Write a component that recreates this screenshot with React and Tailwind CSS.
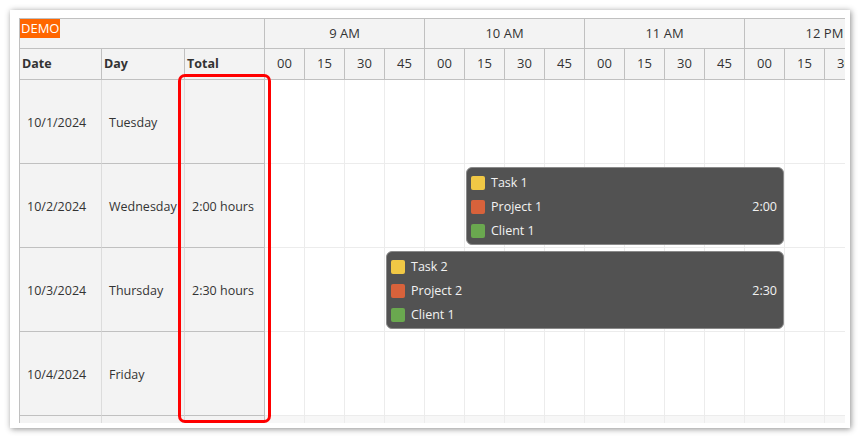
import React from 'react'

const hours = ['9 AM', '10 AM', '11 AM', '12 PM']
const minutes = ['00', '15', '30', '45']

const rows = [
  { date: '10/1/2024', day: 'Tuesday', total: '' },
  {
    date: '10/2/2024',
    day: 'Wednesday',
    total: '2:00 hours',
    event: { task: 'Task 1', project: 'Project 1', client: 'Client 1', time: '2:00', left: 201, width: 318 },
  },
  {
    date: '10/3/2024',
    day: 'Thursday',
    total: '2:30 hours',
    event: { task: 'Task 2', project: 'Project 2', client: 'Client 1', time: '2:30', left: 121, width: 398 },
  },
  { date: '10/4/2024', day: 'Friday', total: '' },
  { date: '10/5/2024', day: 'Saturday', total: '', weekend: true },
]

const EventBox = ({ e }) => {
  const lines = [
    { label: e.task, color: 'bg-[#f1c845]' },
    { label: e.project, color: 'bg-[#d8623b]' },
    { label: e.client, color: 'bg-[#6aa84f]' },
  ]
  return (
    <div
      className="absolute top-[3px] h-[78px] rounded-[6px] border border-[#8a8a8a] bg-[#525252] text-[#f2f2f2] text-[12.5px] pl-[4px] pr-[6px] pt-[3px]"
      style={{ left: e.left, width: e.width }}
    >
      <div className="relative flex flex-col">
        {lines.map((l) => (
          <div key={l.label} className="flex items-center h-[24px]">
            <span className={`w-[14px] h-[14px] rounded-[2px] ${l.color}`} />
            <span className="ml-[6px]">{l.label}</span>
          </div>
        ))}
        <div className="absolute right-0 top-[24px] h-[24px] flex items-center">{e.time}</div>
      </div>
    </div>
  )
}

const App = () => {
  return (
    <div className="w-[860px] h-[438px] bg-white pt-[10px] pl-[10px]" style={{ fontFamily: '"Open Sans", "Noto Sans", sans-serif' }}>
      <div className="relative w-[840px] h-[418px] bg-white shadow-[1px_1px_6px_rgba(0,0,0,0.45)] pl-[9px] pt-[8px]">
        <div className="w-[826px] h-[405px] overflow-hidden border-l border-t border-[#c0c0c0] text-[12.5px] text-[#333]">
          <div className="w-[1000px]">
            {/* header row 1 */}
            <div className="flex h-[30px] bg-[#f3f3f3] border-b border-[#c0c0c0]">
              <div className="w-[245px] shrink-0 border-r border-[#c0c0c0]">
                <span className="inline-block bg-[#ff6600] text-white text-[13px] leading-[19px] px-[1px]">DEMO</span>
              </div>
              {hours.map((h) => (
                <div key={h} className="w-[160px] shrink-0 border-r border-[#c0c0c0] flex items-center justify-center text-[13px]">
                  {h}
                </div>
              ))}
            </div>
            {/* header row 2 */}
            <div className="flex h-[31px] bg-[#f3f3f3] border-b border-[#c0c0c0]">
              <div className="w-[82px] shrink-0 border-r border-[#c0c0c0] flex items-center pl-[2px] font-bold">Date</div>
              <div className="w-[83px] shrink-0 border-r border-[#c0c0c0] flex items-center pl-[2px] font-bold">Day</div>
              <div className="w-[80px] shrink-0 border-r border-[#c0c0c0] flex items-center pl-[2px] font-bold">Total</div>
              {hours.map((h) =>
                minutes.map((m) => (
                  <div key={h + m} className="w-[40px] shrink-0 border-r border-[#c0c0c0] flex items-center justify-center text-[13px]">
                    {m}
                  </div>
                ))
              )}
            </div>
            {/* body */}
            {rows.map((r) => (
              <div key={r.date} className="flex h-[84px]">
                <div className="w-[82px] shrink-0 bg-[#f3f3f3] border-r border-[#dcdcdc] border-b border-b-[#c0c0c0] flex items-center pl-[7px] pt-[3px]">{r.date}</div>
                <div className="w-[83px] shrink-0 bg-[#f3f3f3] border-r border-[#dcdcdc] border-b border-b-[#c0c0c0] flex items-center pl-[7px] pt-[3px]">{r.day}</div>
                <div className="w-[80px] shrink-0 bg-[#f3f3f3] border-r border-[#c0c0c0] border-b border-b-[#c0c0c0] flex items-center pl-[7px] pt-[3px]">{r.total}</div>
                <div className="relative flex">
                  {hours.map((h) =>
                    minutes.map((m) => (
                      <div
                        key={h + m}
                        className={`w-[40px] shrink-0 border-r border-b border-[#ececec] ${r.weekend ? 'bg-[#f7f7f7]' : 'bg-white'}`}
                      />
                    ))
                  )}
                  {r.event && <EventBox e={r.event} />}
                </div>
              </div>
            ))}
          </div>
        </div>
        {/* highlight around Total column */}
        <div className="absolute left-[168px] top-[64px] w-[93px] h-[349px] border-[3px] border-[#ff0000] rounded-[7px] pointer-events-none" />
      </div>
    </div>
  )
}

export default App
